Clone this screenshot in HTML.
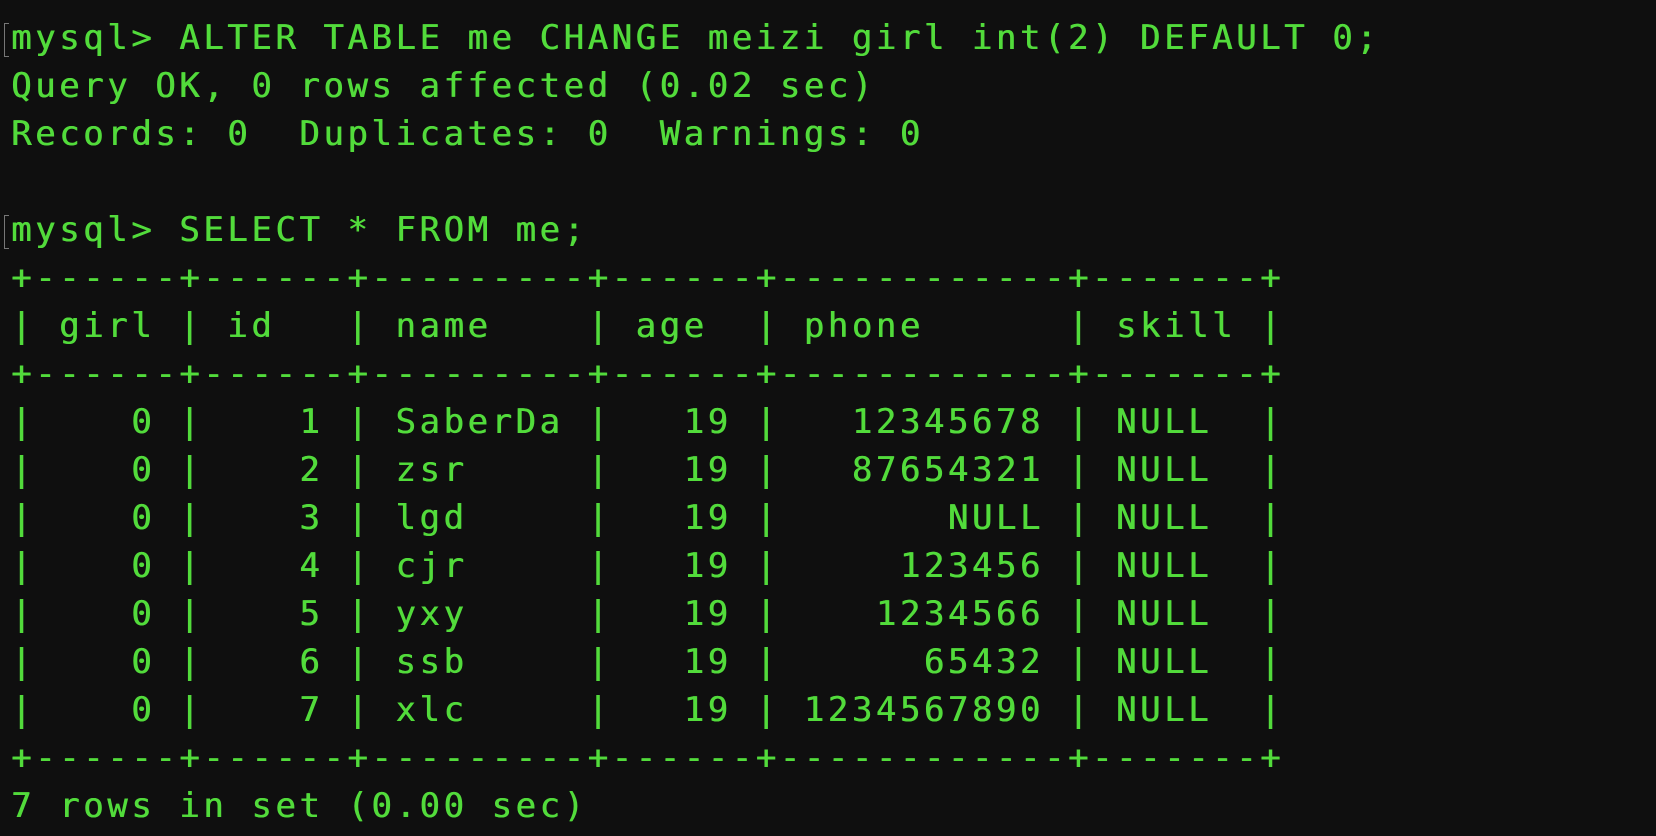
<!DOCTYPE html>
<html><head><meta charset="utf-8"><style>
html,body{margin:0;padding:0;background:#0f0f0f;width:1656px;height:836px;overflow:hidden}
pre{margin:0;position:absolute;left:11px;top:14px;font-family:"DejaVu Sans Mono","Liberation Mono",monospace;font-size:34px;letter-spacing:3.55px;line-height:48px;color:#52db3b;text-shadow:0.6px 0 0 #52db3b}
.b{position:absolute;left:4px;width:4px;height:32px;border:1.5px solid #777;border-right:none}
</style></head><body>
<div class="b" style="top:23px"></div>
<div class="b" style="top:215px"></div>
<pre>mysql&gt; ALTER TABLE me CHANGE meizi girl int(2) DEFAULT 0;
Query OK, 0 rows affected (0.02 sec)
Records: 0  Duplicates: 0  Warnings: 0

mysql&gt; SELECT * FROM me;
+------+------+---------+------+------------+-------+
| girl | id   | name    | age  | phone      | skill |
+------+------+---------+------+------------+-------+
|    0 |    1 | SaberDa |   19 |   12345678 | NULL  |
|    0 |    2 | zsr     |   19 |   87654321 | NULL  |
|    0 |    3 | lgd     |   19 |       NULL | NULL  |
|    0 |    4 | cjr     |   19 |     123456 | NULL  |
|    0 |    5 | yxy     |   19 |    1234566 | NULL  |
|    0 |    6 | ssb     |   19 |      65432 | NULL  |
|    0 |    7 | xlc     |   19 | 1234567890 | NULL  |
+------+------+---------+------+------------+-------+
7 rows in set (0.00 sec)</pre>
</body></html>
